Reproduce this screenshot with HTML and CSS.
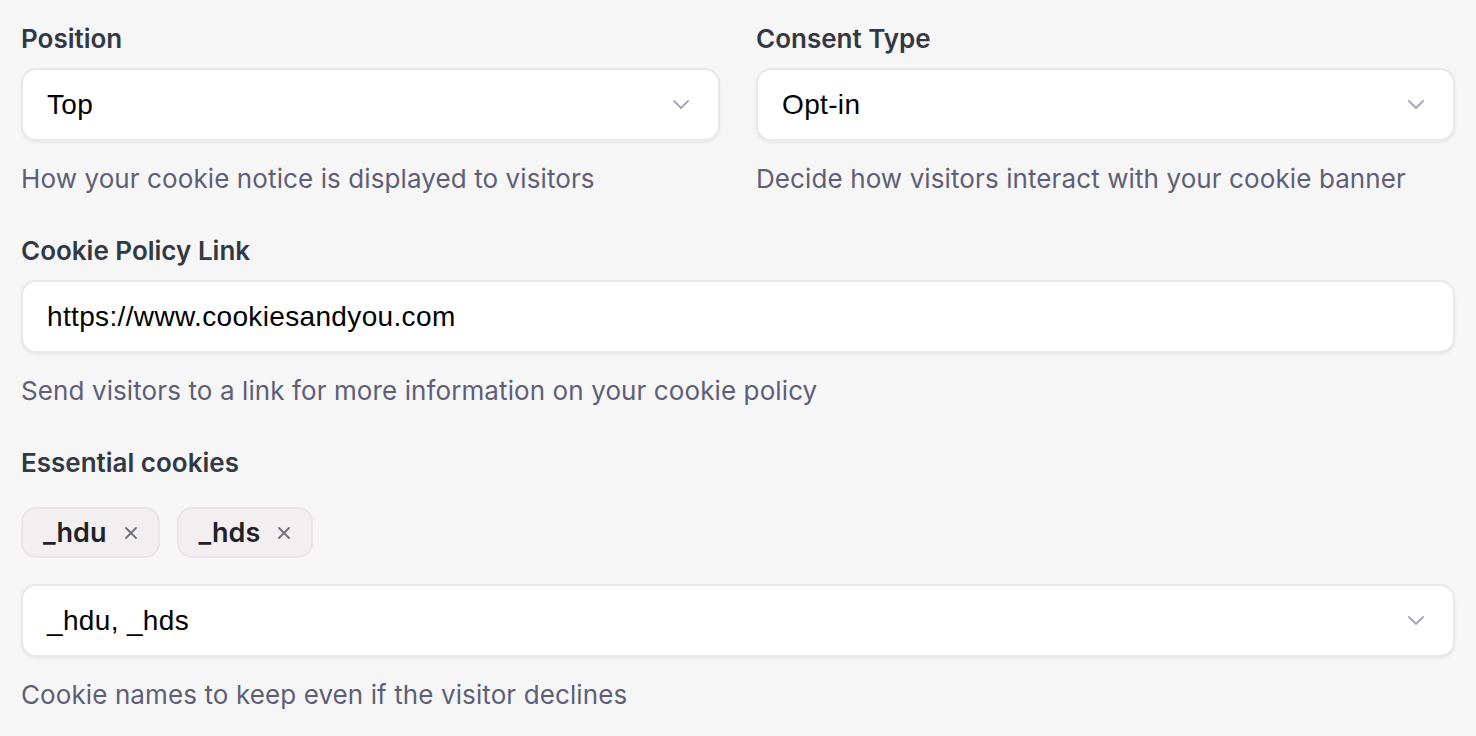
FILE: index.html
```html
<!DOCTYPE html>
<html lang="en">
<head>
<meta charset="utf-8">
<title>Cookie settings</title>
<link rel="stylesheet" href="styles.css">
</head>
<body>
<form class="settings">
  <div class="row">
    <div class="field">
      <label class="label">Position</label>
      <div class="control select">
        <span class="value">Top</span>
        <svg class="chevron" viewBox="0 0 16 9" width="16" height="9"><polyline points="1,1 8,8 15,1"/></svg>
      </div>
      <p class="help">How your cookie notice is displayed to visitors</p>
    </div>
    <div class="field">
      <label class="label">Consent Type</label>
      <div class="control select">
        <span class="value">Opt-in</span>
        <svg class="chevron" viewBox="0 0 16 9" width="16" height="9"><polyline points="1,1 8,8 15,1"/></svg>
      </div>
      <p class="help">Decide how visitors interact with your cookie banner</p>
    </div>
  </div>

  <div class="field">
    <label class="label">Cookie Policy Link</label>
    <div class="control">
      <span class="value">https://www.cookiesandyou.com</span>
    </div>
    <p class="help">Send visitors to a link for more information on your cookie policy</p>
  </div>

  <div class="field">
    <label class="label">Essential cookies</label>
    <div class="chips">
      <span class="chip">_hdu <svg class="x" viewBox="0 0 12 12" width="12" height="12"><path d="M1 1 L11 11 M11 1 L1 11"/></svg></span>
      <span class="chip">_hds <svg class="x" viewBox="0 0 12 12" width="12" height="12"><path d="M1 1 L11 11 M11 1 L1 11"/></svg></span>
    </div>
    <div class="control select">
      <span class="value">_hdu, _hds</span>
      <svg class="chevron" viewBox="0 0 16 9" width="16" height="9"><polyline points="1,1 8,8 15,1"/></svg>
    </div>
    <p class="help">Cookie names to keep even if the visitor declines</p>
  </div>
</form>
</body>
</html>
```

FILE: styles.css
```css
* { box-sizing: border-box; }

html, body {
  margin: 0;
  background: #f6f6f6;
}

body {
  font-family: Inter, "Noto Sans", sans-serif;
  padding: 22px 21px 0 21px;
}

.settings {
  display: flex;
  flex-direction: column;
  gap: 39px;
}

.row {
  display: grid;
  grid-template-columns: 1fr 1fr;
  column-gap: 36px;
}

.field {
  display: flex;
  flex-direction: column;
}

.label {
  font-size: 26px;
  line-height: 34px;
  font-weight: 600;
  color: #323844;
  margin-bottom: 12px;
}

.control {
  height: 73px;
  background: #ffffff;
  border: 2px solid #ece6e9;
  border-radius: 15px;
  box-shadow: 0 2px 3px rgba(60, 40, 50, 0.06);
  display: flex;
  align-items: center;
  justify-content: space-between;
  padding: 0 29px 0 24px;
}

.value {
  font-family: "Liberation Sans", Arial, sans-serif;
  font-size: 28px;
  letter-spacing: 0.35px;
  color: #000000;
}

.chevron {
  fill: none;
  stroke: #a9a4b4;
  stroke-width: 1.8;
  stroke-linecap: round;
  stroke-linejoin: round;
}

.help {
  margin: 22px 0 0 0;
  font-size: 26px;
  line-height: 32px;
  letter-spacing: 0.1px;
  color: #5e5f76;
}

.chips {
  display: flex;
  gap: 17px;
  margin: 15px 0 26px 0;
}

.chip {
  height: 51px;
  display: inline-flex;
  align-items: center;
  gap: 18px;
  padding: 0 21px 0 20px;
  background: #f3eef0;
  border: 2px solid #ece4e7;
  border-radius: 15px;
  font-size: 27px;
  font-weight: 600;
  color: #1f2229;
}

.x {
  fill: none;
  stroke: #6f717b;
  stroke-width: 1.8;
  stroke-linecap: round;
}
```
